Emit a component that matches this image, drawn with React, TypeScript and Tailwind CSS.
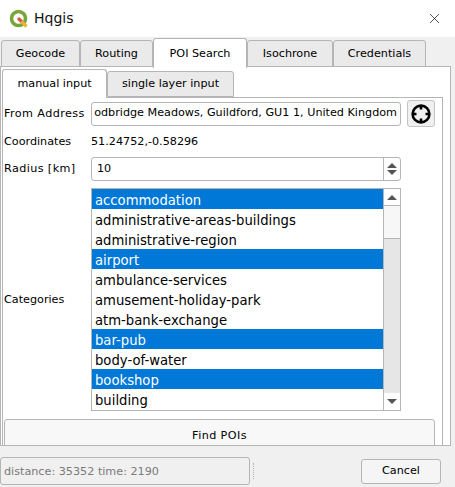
import { X } from 'lucide-react';

const categories = [
  { name: 'accommodation', selected: true },
  { name: 'administrative-areas-buildings', selected: false },
  { name: 'administrative-region', selected: false },
  { name: 'airport', selected: true },
  { name: 'ambulance-services', selected: false },
  { name: 'amusement-holiday-park', selected: false },
  { name: 'atm-bank-exchange', selected: false },
  { name: 'bar-pub', selected: true },
  { name: 'body-of-water', selected: false },
  { name: 'bookshop', selected: true },
  { name: 'building', selected: false },
];

const outerTabs = [
  { label: 'Geocode', width: 'w-[79px]' },
  { label: 'Routing', width: 'w-[73px]' },
  { label: 'POI Search', width: 'w-[94px]', active: true },
  { label: 'Isochrone', width: 'w-[86px]' },
  { label: 'Credentials', width: 'w-[93px]' },
];

function QgisLogo() {
  return (
    <svg width="20" height="20" viewBox="0 0 20 20">
      <circle cx="9.5" cy="9.5" r="7" fill="none" stroke="#76a53a" strokeWidth="3.6" />
      <path d="M9.5 9.5l8 8" stroke="#e8b23a" strokeWidth="3.4" />
      <path d="M9 9l3.5 3.5" stroke="#d9534f" strokeWidth="3" />
    </svg>
  );
}

function Crosshair() {
  return (
    <svg width="22" height="22" viewBox="0 0 22 22" fill="none" stroke="#000">
      <circle cx="11" cy="11" r="8.4" strokeWidth="2.6" />
      <path d="M11 2v4.5M11 15.5v4.5M2 11h4.5M15.5 11h4.5" strokeWidth="2.6" />
    </svg>
  );
}

function UpArrow() {
  return <div className="w-0 h-0 border-x-[5px] border-x-transparent border-b-[5px] border-b-[#555]" />;
}

function DownArrow() {
  return <div className="w-0 h-0 border-x-[5px] border-x-transparent border-t-[5px] border-t-[#555]" />;
}

export default function App() {
  return (
    <div className="w-[455px] h-[487px] overflow-hidden bg-[#f0f0f0] flex flex-col text-[11.2px] text-black font-['DejaVu_Sans',sans-serif]">
      {/* title bar */}
      <div className="h-[37px] shrink-0 bg-white flex items-center pl-[9px] pr-[12px]">
        <QgisLogo />
        <span className="ml-[5px] text-[14px] text-[#111]">Hqgis</span>
        <X className="ml-auto" size={17} strokeWidth={1} color="#111" />
      </div>

      {/* outer tabs */}
      <div className="h-[30px] shrink-0 flex items-end pl-[1px] relative z-10">
        {outerTabs.map(t => (
          <div
            key={t.label}
            className={
              t.active
                ? `${t.width} h-[30px] -mb-[1px] pt-[1px] bg-white border border-b-0 border-[#b5b5b5] rounded-t-[3px] flex items-center justify-center`
                : `${t.width} h-[27px] pt-[2px] bg-[#eaeaea] border border-[#b5b5b5] rounded-t-[3px] flex items-center justify-center`
            }
          >
            {t.label}
          </div>
        ))}
      </div>

      {/* outer pane */}
      <div className="h-[380px] w-[451px] shrink-0 bg-white border border-[#b5b5b5] -mt-[1px] pl-[1px] pr-[7px] pt-[1px] overflow-hidden">
        {/* inner tabs */}
        <div className="h-[29px] flex items-end relative z-10">
          <div className="w-[105px] h-[29px] -mb-[1px] pt-[1px] bg-white border border-b-0 border-[#b5b5b5] rounded-t-[3px] flex items-center justify-center">manual input</div>
          <div className="w-[127px] h-[26px] bg-[#eaeaea] border border-[#b5b5b5] rounded-t-[3px] flex items-center justify-center">single layer input</div>
        </div>

        {/* inner pane */}
        <div className="h-[360px] border border-[#b5b5b5] bg-white pl-[1px] pr-[6px] pt-[2px]">
          <div className="flex items-center h-[27px]">
            <div className="w-[87px] shrink-0 pt-[1px] tracking-[0.4px]">From Address</div>
            <div className="w-[310px] h-[24px] shrink-0 border border-[#b5b5b5] rounded-[3px] flex items-center justify-end px-[3px] whitespace-nowrap">
              odbridge Meadows, Guildford, GU1 1, United Kingdom
            </div>
            <div className="ml-[6px] w-[28px] h-[27px] bg-[#f0f0f0] border border-[#c4c4c4] rounded-[3px] flex items-center justify-center">
              <Crosshair />
            </div>
          </div>

          <div className="flex items-center h-[30px]">
            <div className="w-[87px] shrink-0">Coordinates</div>
            <div>51.24752,-0.58296</div>
          </div>

          <div className="flex items-center h-[24px]">
            <div className="w-[87px] shrink-0 tracking-[0.4px]">Radius [km]</div>
            <div className="w-[310px] h-[24px] border border-[#b5b5b5] rounded-[3px] flex items-center pl-[5px]">
              10
              <div className="ml-auto w-[17px] h-full border-l border-[#b5b5b5] flex flex-col items-center justify-center gap-[2px]">
                <UpArrow />
                <DownArrow />
              </div>
            </div>
          </div>

          <div className="flex items-center mt-[7px]">
            <div className="w-[87px] shrink-0 pt-[2px]">Categories</div>
            <div className="w-[310px] h-[223px] border border-[#b5b5b5] flex overflow-hidden">
              <div className="flex-1 text-[13.2px] leading-[23px]">
                {categories.map(c => (
                  <div key={c.name} className={c.selected ? 'h-[20px] pl-[3px] bg-[#0078d7] text-white' : 'h-[20px] pl-[3px]'}>
                    {c.name}
                  </div>
                ))}
              </div>
              <div className="w-[17px] border-l border-[#b5b5b5] flex flex-col bg-[#e6e6e6]">
                <div className="h-[17px] bg-white border-b border-[#b5b5b5] flex items-center justify-center">
                  <UpArrow />
                </div>
                <div className="h-[33px] bg-[#f7f7f7] border-b border-[#b5b5b5]" />
                <div className="flex-1" />
                <div className="h-[17px] bg-white flex items-center justify-center">
                  <DownArrow />
                </div>
              </div>
            </div>
          </div>

          <div className="mt-[8px] w-[431px] h-[40px] border border-[#b5b5b5] rounded-[3px] bg-[#f8f8f8] flex justify-center pt-[8px] tracking-[0.4px]">
            Find POIs
          </div>
        </div>
      </div>

      {/* status row */}
      <div className="flex items-center pt-[11px]">
        <div className="w-[250px] h-[28px] pt-[2px] border border-[#b5b5b5] rounded-[3px] flex items-center pl-[3px] text-[#7a7a7a]">
          distance: 35352 time: 2190
        </div>
        <div className="ml-[3px] h-[16px] border-l border-dotted border-[#b5b5b5]" />
        <div className="ml-[107px] w-[80px] h-[25px] bg-[#f5f5f5] border border-[#b5b5b5] rounded-[3px] flex items-center justify-center">
          Cancel
        </div>
      </div>
    </div>
  );
}
